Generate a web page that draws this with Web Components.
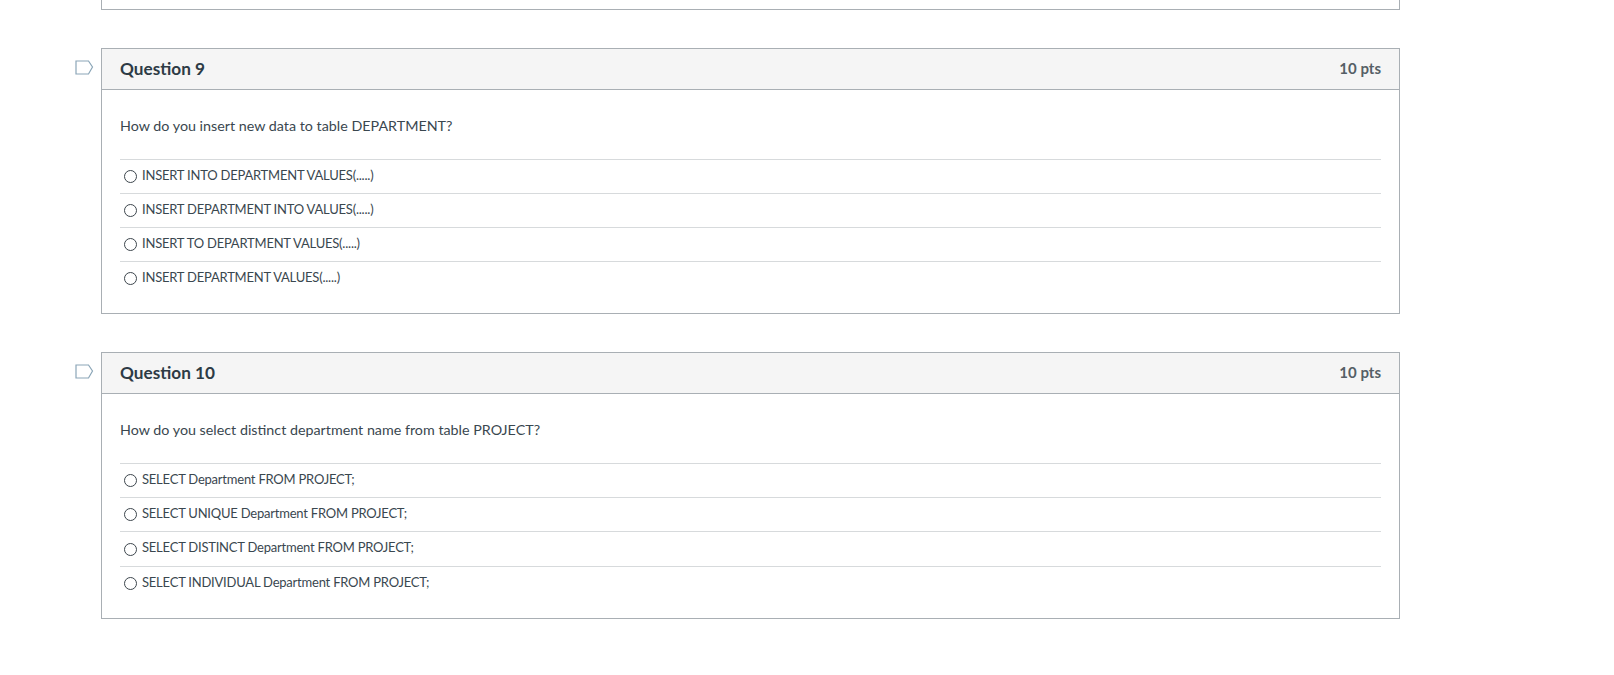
<!DOCTYPE html>
<html>
<head>
<meta charset="utf-8">
<title>Quiz</title>
<style>
  body {
    margin: 0;
    background: #fff;
    font-family: Lato, "Liberation Sans", sans-serif;
    color: #2d3b45;
  }
</style>
</head>
<body>
<quiz-page>
  <quiz-question number="9" points="10 pts" prompt="How do you insert new data to table DEPARTMENT?">
    <quiz-answer>INSERT INTO DEPARTMENT VALUES(.....)</quiz-answer>
    <quiz-answer>INSERT DEPARTMENT INTO VALUES(.....)</quiz-answer>
    <quiz-answer>INSERT TO DEPARTMENT VALUES(.....)</quiz-answer>
    <quiz-answer>INSERT DEPARTMENT VALUES(.....)</quiz-answer>
  </quiz-question>
  <quiz-question number="10" points="10 pts" prompt="How do you select distinct department name from table PROJECT?">
    <quiz-answer>SELECT Department FROM PROJECT;</quiz-answer>
    <quiz-answer>SELECT UNIQUE Department FROM PROJECT;</quiz-answer>
    <quiz-answer style="height: 35px">SELECT DISTINCT Department FROM PROJECT;</quiz-answer>
    <quiz-answer>SELECT INDIVIDUAL Department FROM PROJECT;</quiz-answer>
  </quiz-question>
</quiz-page>

<script>
// Page column: cut off previous card on top, then the questions.
const pageTemplate = document.createElement('template')
pageTemplate.innerHTML = `
<style>
  :host {
    display: flex;
    flex-direction: column;
    gap: 38px;
    width: 1299px;
    margin-left: 101px;
  }
  .previous {
    height: 9px;
    border: 1px solid #a9afb4;
    border-top: none;
  }
  ::slotted(quiz-question) {
    flex: none;
  }
</style>
<div class="previous"></div>
<slot></slot>
`

customElements.define('quiz-page',
  class extends HTMLElement {
    constructor() {
      super()
      this.attachShadow({ mode: 'open' })
        .appendChild(pageTemplate.content.cloneNode(true))
    }
  }
)

const questionTemplate = document.createElement('template')
questionTemplate.innerHTML = `
<style>
  :host {
    display: block;
    position: relative;
    box-sizing: border-box;
    border: 1px solid #a9afb4;
    padding-bottom: 18px;
  }
  .flag {
    position: absolute;
    left: -27px;
    top: 11px;
    width: 19px;
    height: 15px;
  }
  header {
    display: flex;
    justify-content: space-between;
    align-items: center;
    height: 38px;
    padding: 0 18px 2px;
    background: #f5f5f5;
    border-bottom: 1px solid #a9afb4;
  }
  h2 {
    margin: 0;
    font-size: 17.2px;
    font-weight: 700;
    color: #2d3b45;
  }
  .points {
    font-size: 15px;
    font-weight: 700;
    color: #555f66;
  }
  .prompt {
    margin: 0;
    padding: 26px 18px 23px;
    font-size: 14.3px;
    line-height: 20px;
    color: #3a474f;
  }
  .answers {
    margin: 0 18px;
  }
</style>
<svg class="flag" viewBox="0 0 19 15" aria-hidden="true">
  <path d="M1 1 H13.5 L17.5 7 L13.5 14 H1 Z" fill="#fff" stroke="#8ba6b8" stroke-width="1.2"/>
</svg>
<header>
  <h2></h2>
  <span class="points"></span>
</header>
<p class="prompt"></p>
<div class="answers"><slot></slot></div>
`

customElements.define('quiz-question',
  class extends HTMLElement {
    constructor() {
      super()
      this.attachShadow({ mode: 'open' })
        .appendChild(questionTemplate.content.cloneNode(true))
    }

    connectedCallback() {
      const root = this.shadowRoot
      root.querySelector('h2').textContent = 'Question ' + this.getAttribute('number')
      root.querySelector('.points').textContent = this.getAttribute('points')
      root.querySelector('.prompt').textContent = this.getAttribute('prompt')
    }
  }
)

const answerTemplate = document.createElement('template')
answerTemplate.innerHTML = `
<style>
  :host {
    display: flex;
    align-items: center;
    height: 34px;
    box-sizing: border-box;
    border-top: 1px solid #d7dadc;
    padding: 0 0 4px 4px;
    font-size: 13px;
    letter-spacing: -0.22px;
    color: #3a474f;
  }
  .radio {
    flex: none;
    width: 11px;
    height: 11px;
    margin: 4px 5px 0 0;
    border: 1px solid #3d464d;
    border-radius: 50%;
  }
</style>
<span class="radio"></span>
<slot></slot>
`

customElements.define('quiz-answer',
  class extends HTMLElement {
    constructor() {
      super()
      this.attachShadow({ mode: 'open' })
        .appendChild(answerTemplate.content.cloneNode(true))
    }
  }
)
</script>
</body>
</html>
